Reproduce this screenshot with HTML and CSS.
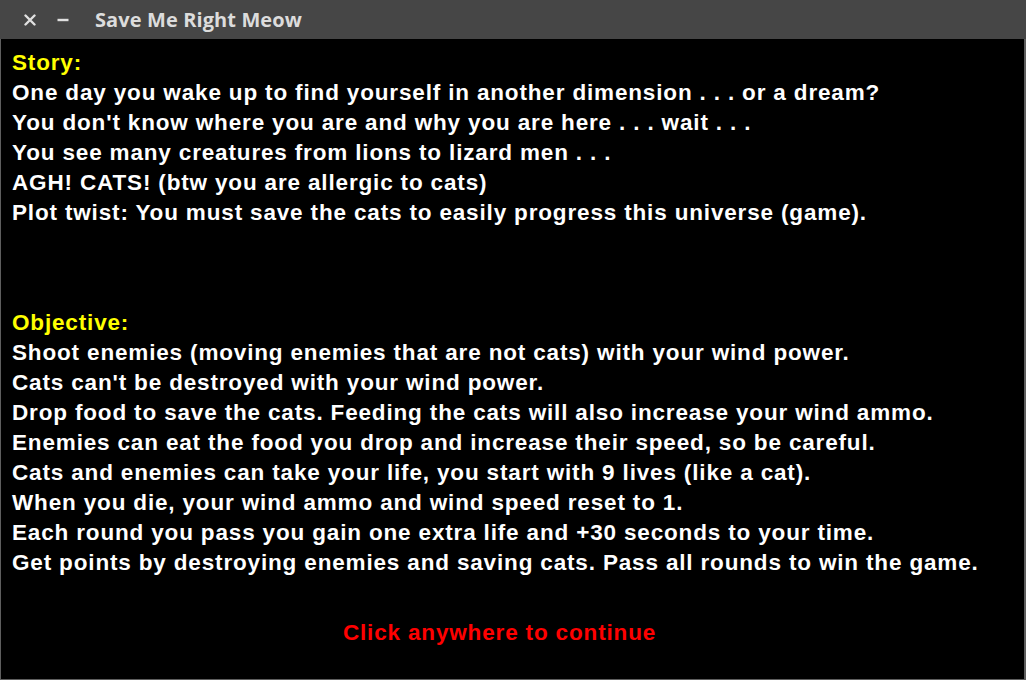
FILE: index.html
```html
<!DOCTYPE html>
<html>
<head>
<meta charset="utf-8">
<link rel="stylesheet" href="styles.css">
</head>
<body>
<div class="window">
  <div class="titlebar">
    <svg class="btn close" width="12" height="12" viewBox="0 0 12 12"><path d="M1.5 1.5 L10.5 10.5 M10.5 1.5 L1.5 10.5" stroke="#e0e0e0" stroke-width="2.4" stroke-linecap="round"/></svg>
    <svg class="btn min" width="12" height="12" viewBox="0 0 12 12"><path d="M0.5 6 H11.5" stroke="#e0e0e0" stroke-width="2.4"/></svg>
    <span class="title">Save Me Right Meow</span>
  </div>
  <div class="content">
    <div class="block story">
      <div class="heading">Story:</div>
      <div>One day you wake up to find yourself in another dimension . . . or a dream?</div>
      <div>You don't know where you are and why you are here . . . wait . . .</div>
      <div>You see many creatures from lions to lizard men . . .</div>
      <div>AGH! CATS! (btw you are allergic to cats)</div>
      <div>Plot twist: You must save the cats to easily progress this universe (game).</div>
    </div>
    <div class="block objective">
      <div class="heading">Objective:</div>
      <div>Shoot enemies (moving enemies that are not cats) with your wind power.</div>
      <div>Cats can't be destroyed with your wind power.</div>
      <div>Drop food to save the cats. Feeding the cats will also increase your wind ammo.</div>
      <div>Enemies can eat the food you drop and increase their speed, so be careful.</div>
      <div>Cats and enemies can take your life, you start with 9 lives (like a cat).</div>
      <div>When you die, your wind ammo and wind speed reset to 1.</div>
      <div>Each round you pass you gain one extra life and +30 seconds to your time.</div>
      <div>Get points by destroying enemies and saving cats. Pass all rounds to win the game.</div>
    </div>
    <div class="continue">Click anywhere to continue</div>
  </div>
</div>
</body>
</html>
```
FILE: styles.css
```css
html, body {
  margin: 0;
  padding: 0;
  background: #000;
}
.window {
  width: 1026px;
  height: 680px;
  display: flex;
  flex-direction: column;
}
.titlebar {
  height: 39px;
  background: #464646;
  display: flex;
  align-items: center;
  font-family: "Open Sans", "DejaVu Sans", sans-serif;
  font-weight: 700;
  color: #dcdcdc;
  flex-shrink: 0;
}
.btn {
  display: block;
  flex-shrink: 0;
}
.close {
  margin-left: 24px;
}
.min {
  margin-left: 21px;
}
.title {
  margin-left: 26px;
  font-size: 20px;
  letter-spacing: 0.1px;
}
.content {
  flex: 1;
  background: #000;
  border: 1px solid #5e5e5e;
  border-top: none;
  border-right-width: 2px;
  padding: 9px 0 0 11px;
  font-family: "Liberation Sans", Arial, sans-serif;
  font-weight: 700;
  font-size: 22.5px;
  line-height: 30px;
  color: #fff;
  letter-spacing: 0.84px;
}
.heading {
  color: #ffff00;
}
.objective {
  margin-top: 80px;
}
.continue {
  color: #ff0000;
  text-align: center;
  margin-top: 40px;
  padding-right: 37px;
}
```
